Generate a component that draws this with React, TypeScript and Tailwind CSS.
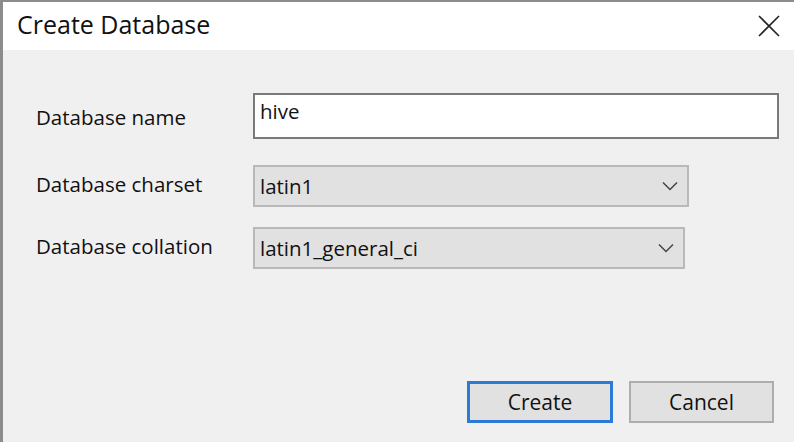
import React from "react";

const font = { fontFamily: '"Open Sans", "Noto Sans", Arial, sans-serif' };

function Chevron() {
  return (
    <svg width="16" height="10" viewBox="0 0 16 10" className="shrink-0">
      <path d="M1 1.5 L8 8.5 L15 1.5" fill="none" stroke="#444" strokeWidth="1.5" />
    </svg>
  );
}

interface SelectProps {
  value: string;
  width: string;
}

function Select({ value, width }: SelectProps) {
  return (
    <div
      className={`flex h-[42px] items-center justify-between border-2 border-[#b9b9b9] bg-[#e1e1e1] pl-[5px] pr-[9px] text-[20.5px] leading-[28px] text-[#111] ${width}`}
    >
      <span>{value}</span>
      <Chevron />
    </div>
  );
}

export default function App() {
  return (
    <div
      className="flex h-[442px] w-[794px] flex-col border-l-[3px] border-t-2 border-[#8c8c8c] bg-[#f0f0f0]"
      style={font}
    >
      <div className="flex h-[48px] shrink-0 items-center justify-between bg-white pl-[14px] pr-[14px]">
        <span className="pb-[4px] text-[25px] leading-[32px] text-[#111]">Create Database</span>
        <svg width="22" height="22" viewBox="0 0 22 22">
          <path d="M1 1 L21 21 M21 1 L1 21" stroke="#222" strokeWidth="1.6" />
        </svg>
      </div>

      <div className="flex flex-1 flex-col pl-[33px] pr-[15px] pt-[43px]">
        <div className="flex h-[46px] items-center">
          <span className="w-[217px] pt-[2px] text-[20.5px] leading-[28px] text-[#111]">Database name</span>
          <div className="flex h-[46px] flex-1 items-start border-2 border-[#7a7a7a] bg-white pl-[5px] pt-[2px] text-[20.5px] leading-[28px] text-[#111]">
            hive
          </div>
        </div>
        <div className="mt-[26px] flex items-center">
          <span className="w-[217px] pb-[4px] text-[20.5px] leading-[28px] text-[#111]">Database charset</span>
          <Select value="latin1" width="w-[436px]" />
        </div>
        <div className="mt-[20px] flex items-center">
          <span className="w-[217px] pb-[4px] text-[20.5px] leading-[28px] text-[#111]">Database collation</span>
          <Select value="latin1_general_ci" width="w-[432px]" />
        </div>

        <div className="mt-auto mb-[19px] flex justify-end gap-[16px] pr-[5px]">
          <button className="h-[42px] w-[146px] border-[3px] border-[#2b7ad6] bg-[#e1e1e1] text-[21px] leading-[28px] text-[#111]">
            Create
          </button>
          <button className="h-[42px] w-[145px] border-2 border-[#adadad] bg-[#e1e1e1] text-[21px] leading-[28px] text-[#111]">
            Cancel
          </button>
        </div>
      </div>
    </div>
  );
}
